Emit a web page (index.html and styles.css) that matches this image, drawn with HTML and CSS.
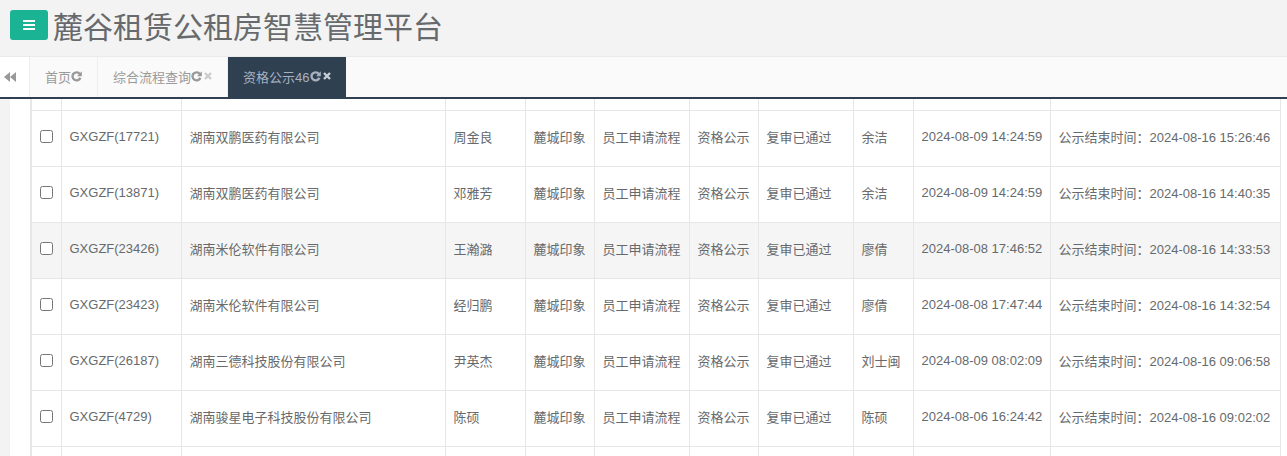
FILE: index.html
```html
<!DOCTYPE html>
<html lang="zh-CN">
<head>
  <meta charset="UTF-8" />
  <title>麓谷租赁公租房智慧管理平台</title>
  <link rel="stylesheet" href="styles.css">
</head>
<body>

<header class="topbar">
  <a class="menu-btn" href="#" aria-label="菜单">
    <span></span><span></span><span></span>
  </a>
  <h1 class="brand">麓谷租赁公租房智慧管理平台</h1>
</header>

<nav class="content-tabs">
  <button class="roll-left" aria-label="向左">
    <svg width="12" height="10" viewBox="0 0 12 10"><path d="M6 0 L0 5 L6 10 Z M12 0 L6 5 L12 10 Z" fill="#999"/></svg>
  </button>
  <div class="tab-list">
    <a class="tab" href="#">首页<svg class="ic-refresh" viewBox="0 0 12 12"><path d="M9.6 3.2 A4.4 4.4 0 1 0 10.2 7.4" fill="none" stroke="currentColor" stroke-width="2.6"/><path d="M11.8 0.4 L11.8 5.6 L6.6 5.6 Z" fill="currentColor"/></svg></a>
    <a class="tab" href="#">综合流程查询<svg class="ic-refresh" viewBox="0 0 12 12"><path d="M9.6 3.2 A4.4 4.4 0 1 0 10.2 7.4" fill="none" stroke="currentColor" stroke-width="2.6"/><path d="M11.8 0.4 L11.8 5.6 L6.6 5.6 Z" fill="currentColor"/></svg><svg class="ic-close" viewBox="0 0 8 8"><path d="M1 1 L7 7 M7 1 L1 7" stroke="currentColor" stroke-width="2.4"/></svg></a>
    <a class="tab active" href="#">资格公示46<svg class="ic-refresh" viewBox="0 0 12 12"><path d="M9.6 3.2 A4.4 4.4 0 1 0 10.2 7.4" fill="none" stroke="currentColor" stroke-width="2.6"/><path d="M11.8 0.4 L11.8 5.6 L6.6 5.6 Z" fill="currentColor"/></svg><svg class="ic-close" viewBox="0 0 8 8"><path d="M1 1 L7 7 M7 1 L1 7" stroke="currentColor" stroke-width="2.4"/></svg></a>
  </div>
</nav>

<main class="wrapper">
  <div class="panel">
    <table class="grid">
      <colgroup>
        <col style="width:30px"><col style="width:120px"><col style="width:264px"><col style="width:80px">
        <col style="width:69px"><col style="width:95px"><col style="width:69px"><col style="width:95px">
        <col style="width:60px"><col style="width:137px"><col style="width:230px">
      </colgroup>
      <tbody>
        <tr class="cut">
          <td></td><td></td><td></td><td></td><td></td><td></td><td></td><td></td><td></td><td></td><td></td>
        </tr>
        <tr>
          <td class="chk"><input type="checkbox"></td><td>GXGZF(17721)</td><td>湖南双鹏医药有限公司</td><td>周金良</td>
          <td>麓城印象</td><td>员工申请流程</td><td>资格公示</td><td>复审已通过</td><td>余洁</td>
          <td>2024-08-09 14:24:59</td><td>公示结束时间：2024-08-16 15:26:46</td>
        </tr>
        <tr>
          <td class="chk"><input type="checkbox"></td><td>GXGZF(13871)</td><td>湖南双鹏医药有限公司</td><td>邓雅芳</td>
          <td>麓城印象</td><td>员工申请流程</td><td>资格公示</td><td>复审已通过</td><td>余洁</td>
          <td>2024-08-09 14:24:59</td><td>公示结束时间：2024-08-16 14:40:35</td>
        </tr>
        <tr class="hover">
          <td class="chk"><input type="checkbox"></td><td>GXGZF(23426)</td><td>湖南米伦软件有限公司</td><td>王瀚潞</td>
          <td>麓城印象</td><td>员工申请流程</td><td>资格公示</td><td>复审已通过</td><td>廖倩</td>
          <td>2024-08-08 17:46:52</td><td>公示结束时间：2024-08-16 14:33:53</td>
        </tr>
        <tr>
          <td class="chk"><input type="checkbox"></td><td>GXGZF(23423)</td><td>湖南米伦软件有限公司</td><td>经归鹏</td>
          <td>麓城印象</td><td>员工申请流程</td><td>资格公示</td><td>复审已通过</td><td>廖倩</td>
          <td>2024-08-08 17:47:44</td><td>公示结束时间：2024-08-16 14:32:54</td>
        </tr>
        <tr>
          <td class="chk"><input type="checkbox"></td><td>GXGZF(26187)</td><td>湖南三德科技股份有限公司</td><td>尹英杰</td>
          <td>麓城印象</td><td>员工申请流程</td><td>资格公示</td><td>复审已通过</td><td>刘士闽</td>
          <td>2024-08-09 08:02:09</td><td>公示结束时间：2024-08-16 09:06:58</td>
        </tr>
        <tr>
          <td class="chk"><input type="checkbox"></td><td>GXGZF(4729)</td><td>湖南骏星电子科技股份有限公司</td><td>陈硕</td>
          <td>麓城印象</td><td>员工申请流程</td><td>资格公示</td><td>复审已通过</td><td>陈硕</td>
          <td>2024-08-06 16:24:42</td><td>公示结束时间：2024-08-16 09:02:02</td>
        </tr>
        <tr>
          <td class="chk"></td><td></td><td></td><td></td><td></td><td></td><td></td><td></td><td></td><td></td><td></td>
        </tr>
      </tbody>
    </table>
  </div>
</main>

</body>
</html>
```

FILE: styles.css
```css
* {
  margin: 0; padding: 0; box-sizing: border-box;
}
html, body {
  height: 100%;
  overflow: hidden;
}
body {
  font-family: "Liberation Sans", "Noto Sans CJK SC", sans-serif;
  font-size: 13px;
  color: #676a6c;
  background: #f3f3f4;
}

/* 顶部标题栏 */
.topbar {
  height: 56px;
  display: flex;
  align-items: flex-start;
  padding: 10px 10px 0;
  gap: 5px;
}
.menu-btn {
  width: 38px;
  height: 30px;
  background: #1ab394;
  border-radius: 3px;
  display: flex;
  flex-direction: column;
  justify-content: center;
  align-items: center;
  gap: 2px;
}
.menu-btn span {
  display: block;
  width: 12px;
  height: 2px;
  background: #fff;
}
.brand {
  font-family: "Noto Sans CJK SC", sans-serif;
  font-weight: 400;
  font-size: 30px;
  line-height: 30px;
  color: #676a6c;
}

/* 页签 */
.content-tabs {
  height: 43px;
  display: flex;
  background: #fafafa;
  border-top: 1px solid #eaeaea;
  border-bottom: 2px solid #2f4050;
}
.roll-left {
  width: 30px;
  border: none;
  border-right: 1px solid #eee;
  background: #fff;
  display: flex;
  align-items: center;
  justify-content: flex-start;
  padding-left: 4px;
}
.tab-list {
  display: flex;
}
.tab {
  display: flex;
  align-items: center;
  padding: 0 15px 2px 15px;
  border-right: 1px solid #eee;
  color: #999;
  text-decoration: none;
  font-size: 13px;
}
.tab .ic-refresh {
  width: 11px;
  height: 11px;
  color: #999;
}
.tab .ic-close {
  width: 8px;
  height: 8px;
  margin-left: 2px;
  color: #ccc;
}
.tab.active {
  background: #2f4050;
  color: #a7b1c2;
  border-right: none;
}
.tab.active .ic-refresh {
  color: #a7b1c2;
}
.tab.active .ic-close {
  color: #c8ced8;
}

/* 内容 */
.wrapper {
  padding-left: 10px;
}
.panel {
  background: #fff;
  padding-left: 20px;
  height: 400px;
}
.grid {
  border-collapse: collapse;
  table-layout: fixed;
  width: 1250px;
  border-left: 2px solid #e7e7e7;
}
.grid td {
  border: 1px solid #e7e7e7;
  border-top: none;
  height: 56px;
  padding: 0 8px 4px;
  vertical-align: middle;
  white-space: nowrap;
  overflow: hidden;
}
.grid tr.cut td {
  height: 11px;
  padding: 0;
}
.grid tr.hover td {
  background: #f5f5f5;
}
.grid td.chk {
  padding: 0 0 4px 8px;
}
.grid input[type="checkbox"] {
  width: 13px;
  height: 13px;
  margin: 0;
  display: block;
}
```
